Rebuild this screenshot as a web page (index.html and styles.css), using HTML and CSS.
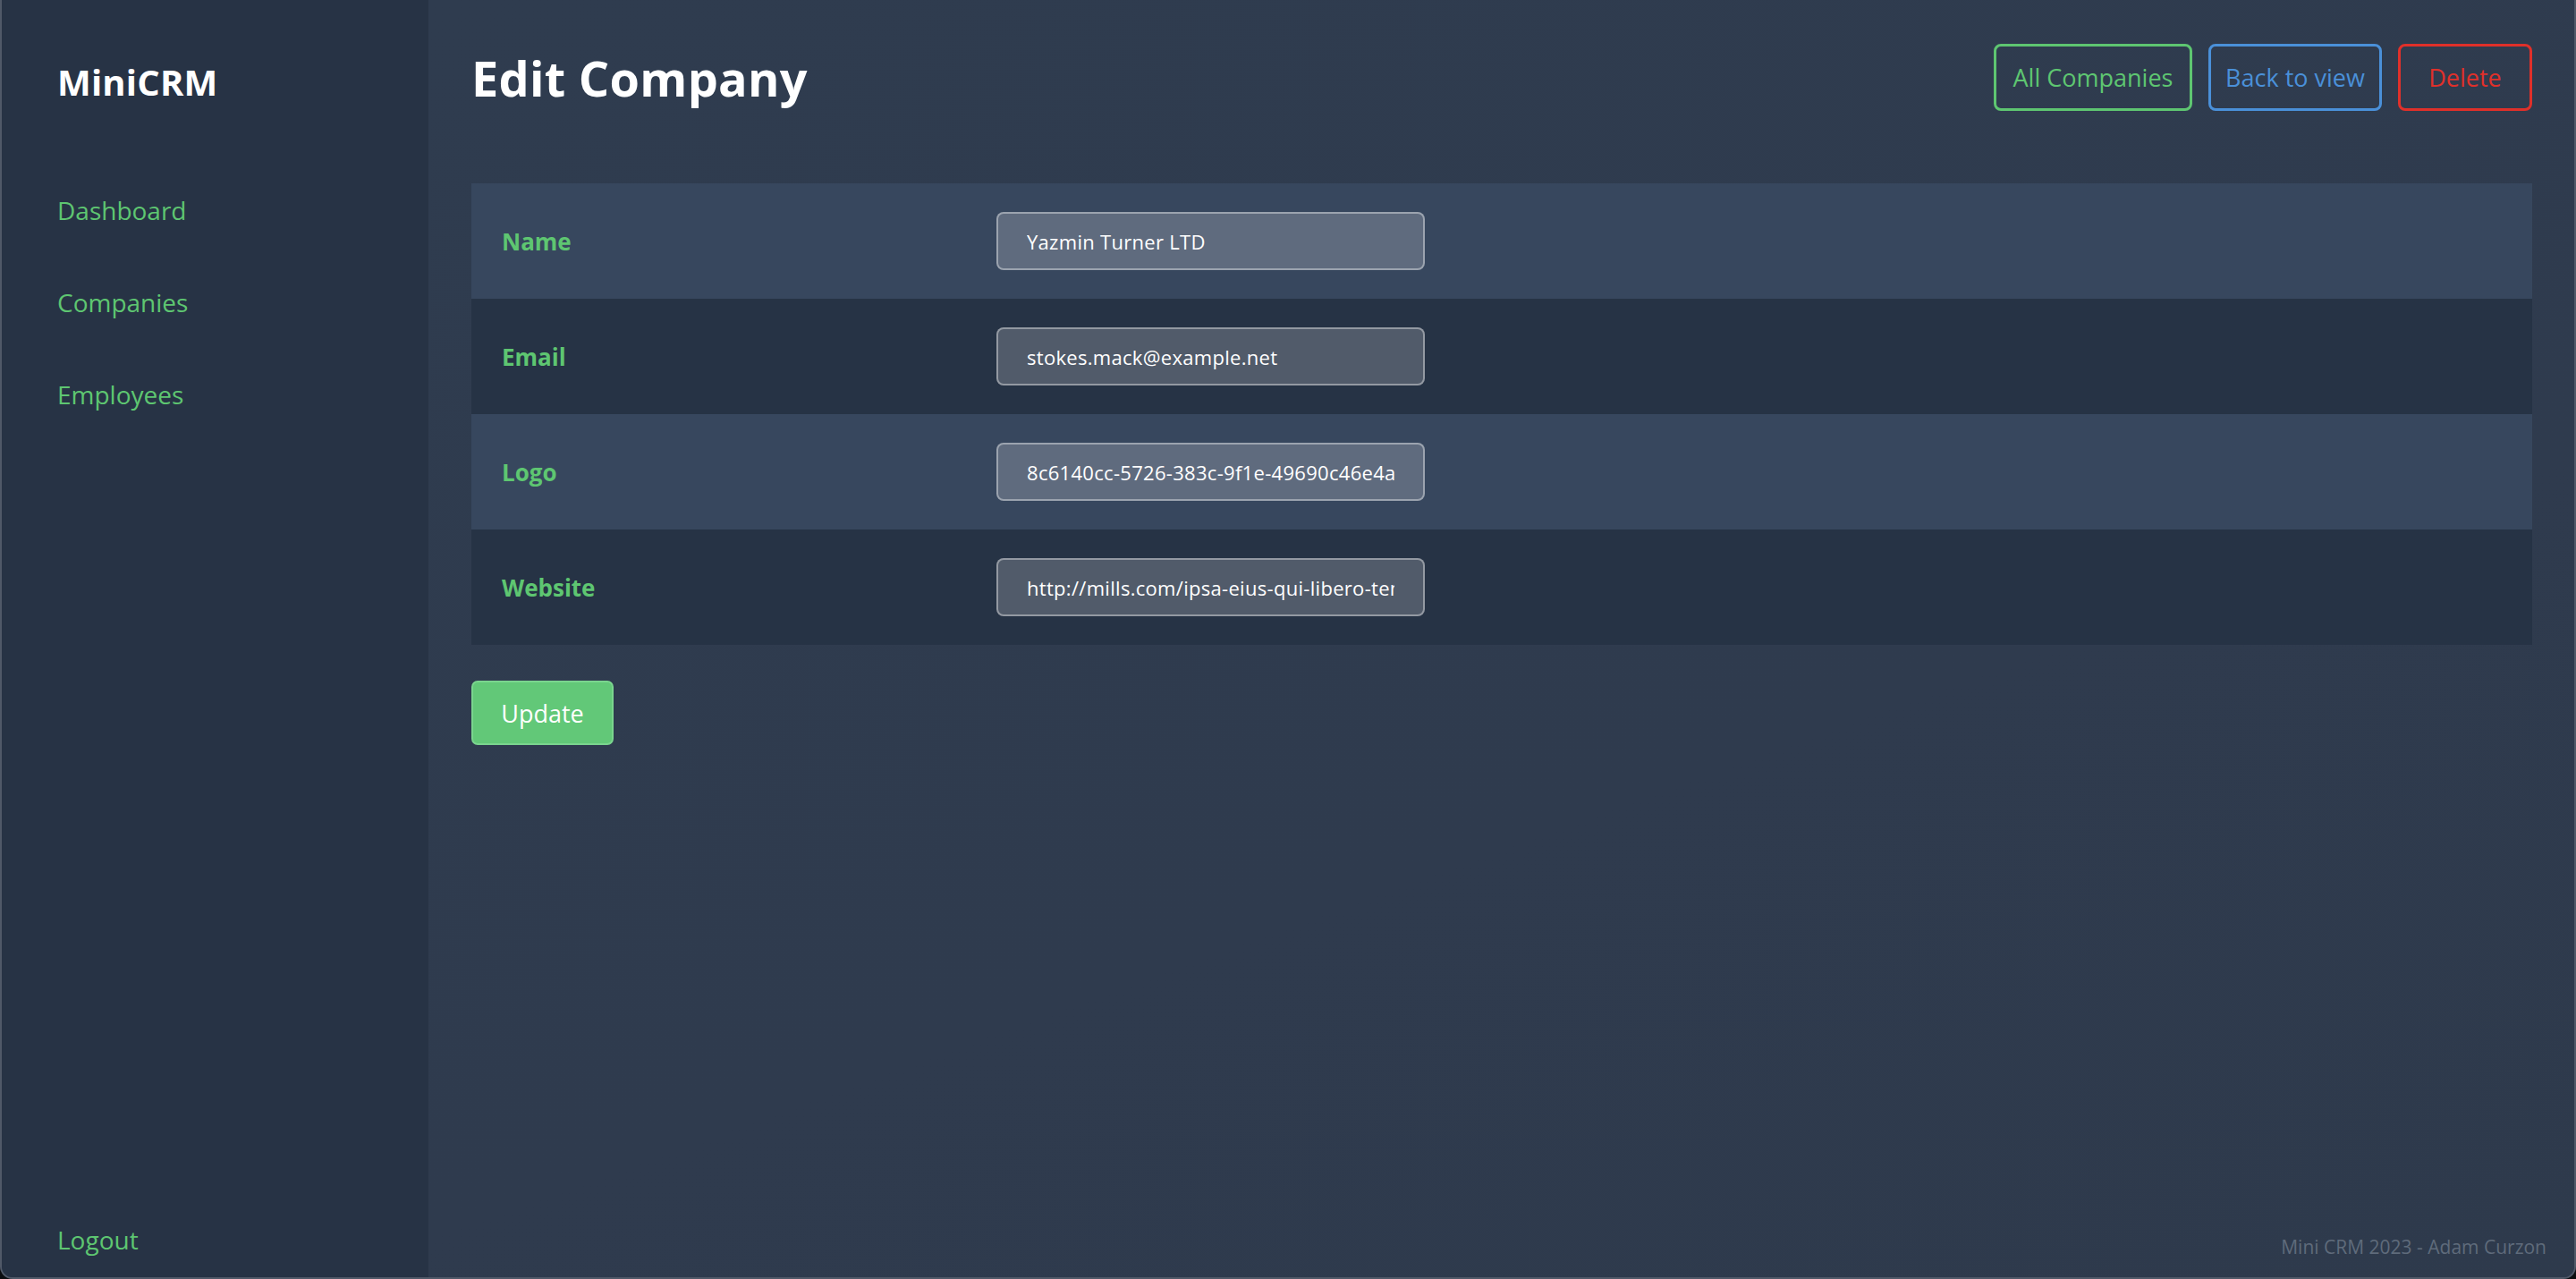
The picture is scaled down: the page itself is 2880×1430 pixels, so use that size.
FILE: index.html
```html
<!DOCTYPE html>
<html lang="en">
<head>
<meta charset="utf-8">
<title>Edit Company - MiniCRM</title>
<link rel="stylesheet" href="styles.css">
</head>
<body>
<div class="window">
  <aside class="sidebar">
    <div class="brand">MiniCRM</div>
    <nav class="nav">
      <a class="nav-link" href="#">Dashboard</a>
      <a class="nav-link" href="#">Companies</a>
      <a class="nav-link" href="#">Employees</a>
    </nav>
    <a class="nav-link logout" href="#">Logout</a>
  </aside>
  <main class="main">
    <header class="page-header">
      <h1 class="title">Edit Company</h1>
      <div class="actions">
        <a class="btn btn-green" href="#">All Companies</a>
        <a class="btn btn-blue" href="#">Back to view</a>
        <a class="btn btn-red" href="#">Delete</a>
      </div>
    </header>
    <form class="form">
      <div class="table">
        <div class="row">
          <label class="label">Name</label>
          <input class="field" type="text" value="Yazmin Turner LTD">
        </div>
        <div class="row">
          <label class="label">Email</label>
          <input class="field" type="text" value="stokes.mack@example.net">
        </div>
        <div class="row">
          <label class="label">Logo</label>
          <input class="field" type="text" value="8c6140cc-5726-383c-9f1e-49690c46e4a1.png">
        </div>
        <div class="row">
          <label class="label">Website</label>
          <input class="field" type="text" value="http://mills.com/ipsa-eius-qui-libero-tempore">
        </div>
      </div>
      <button class="update" type="button">Update</button>
    </form>
    <footer class="footer">Mini CRM 2023 - Adam Curzon</footer>
  </main>
</div>
</body>
</html>
```

FILE: styles.css
```css
* { box-sizing: border-box; }
html, body {
  margin: 0;
  padding: 0;
  background: #0b0d10;
}
body {
  font-family: "Open Sans", "DejaVu Sans", sans-serif;
  width: 2880px;
  height: 1430px;
  overflow: hidden;
}
.window {
  display: flex;
  width: 2880px;
  height: 1430px;
  border: 2px solid #505968;
  border-top: none;
  border-radius: 0 0 14px 14px;
  overflow: hidden;
  background: #2f3b4e;
}
.sidebar {
  width: 477px;
  flex: none;
  background: #273345;
  display: flex;
  flex-direction: column;
  padding: 62px 0 22px 62px;
}
.brand {
  color: #ffffff;
  font-weight: 700;
  font-size: 40px;
  line-height: 60px;
  letter-spacing: 0.2px;
}
.nav {
  display: flex;
  flex-direction: column;
  margin-top: 93px;
  gap: 63px;
}
.nav-link {
  color: #5ec671;
  font-size: 28px;
  line-height: 40px;
  text-decoration: none;
}
.logout {
  margin-top: auto;
}
.main {
  flex: 1;
  display: flex;
  flex-direction: column;
  padding: 49px 47px 20px 48px;
  background: linear-gradient(160deg, #2f3c4f 0%, #2f3b4e 60%, #2e3a4c 100%);
}
.page-header {
  display: flex;
  align-items: center;
  justify-content: space-between;
  height: 75px;
}
.title {
  margin: 0;
  color: #ffffff;
  font-size: 54px;
  font-weight: 700;
  line-height: 1;
  letter-spacing: 0.3px;
}
.actions {
  display: flex;
  gap: 18px;
  height: 75px;
}
.btn {
  display: flex;
  align-items: center;
  justify-content: center;
  height: 75px;
  border: 3px solid;
  border-radius: 8px;
  font-size: 27px;
  text-decoration: none;
}
.btn-green { color: #5ec671; border-color: #5ec671; width: 222px; }
.btn-blue { color: #4a90d9; border-color: #4a90d9; width: 194px; }
.btn-red { color: #e0302a; border-color: #e0302a; width: 150px; }
.form {
  margin-top: 81px;
}
.table {
  display: flex;
  flex-direction: column;
}
.row {
  display: grid;
  grid-template-columns: 553px 479px;
  align-items: center;
  height: 129px;
  padding: 0 34px;
  background: #263345;
}
.row:nth-child(odd) {
  background: #37475e;
}
.label {
  color: #5ec671;
  font-weight: 700;
  font-size: 26px;
}
.field {
  width: 479px;
  height: 65px;
  padding: 0 32px;
  background: rgba(255, 255, 255, 0.2);
  border: 2px solid rgba(255, 255, 255, 0.38);
  border-radius: 8px;
  color: #ffffff;
  font-family: "Open Sans", "DejaVu Sans", sans-serif;
  font-size: 22px;
  letter-spacing: 0.3px;
  outline: none;
}
.update {
  margin-top: 40px;
  width: 159px;
  height: 72px;
  background: #62c878;
  border: 2px solid #7ad58e;
  border-radius: 7px;
  color: #ffffff;
  font-family: "Open Sans", "DejaVu Sans", sans-serif;
  font-size: 27px;
  cursor: pointer;
}
.footer {
  margin-top: auto;
  margin-right: -16px;
  text-align: right;
  color: #5f6b7b;
  font-size: 21px;
}
```
